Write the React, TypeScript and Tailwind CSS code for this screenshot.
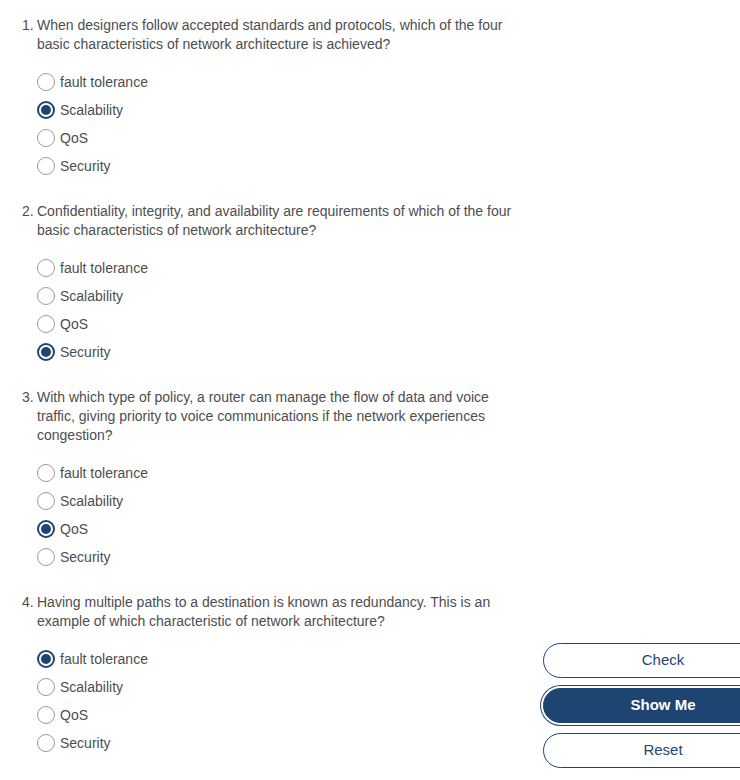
import { useState } from "react"

const options = ["fault tolerance", "Scalability", "QoS", "Security"]

const questions = [
  {
    lines: [
      "When designers follow accepted standards and protocols, which of the four",
      "basic characteristics of network architecture is achieved?",
    ],
    answer: 1,
  },
  {
    lines: [
      "Confidentiality, integrity, and availability are requirements of which of the four",
      "basic characteristics of network architecture?",
    ],
    answer: 3,
  },
  {
    lines: [
      "With which type of policy, a router can manage the flow of data and voice",
      "traffic, giving priority to voice communications if the network experiences",
      "congestion?",
    ],
    answer: 2,
  },
  {
    lines: [
      "Having multiple paths to a destination is known as redundancy. This is an",
      "example of which characteristic of network architecture?",
    ],
    answer: 0,
  },
]

function Radio({ checked }: { checked: boolean }) {
  return (
    <span
      className={
        checked
          ? "flex h-[18px] w-[18px] shrink-0 items-center justify-center rounded-full border-2 border-[#1e4471] bg-white"
          : "flex h-[18px] w-[18px] shrink-0 items-center justify-center rounded-full border border-[#9a9a9a] bg-white"
      }
    >
      {checked && <span className="h-[10px] w-[10px] rounded-full bg-[#1e4471]" />}
    </span>
  )
}

export default function App() {
  const [selected, setSelected] = useState(questions.map((q) => q.answer))

  return (
    <div
      className="flex h-[780px] w-[740px] overflow-hidden bg-white text-[14px] text-[#4d4d4f]"
      style={{ fontFamily: '"Liberation Sans", Arial, sans-serif' }}
    >
      <div className="flex w-[520px] shrink-0 flex-col pl-[22px] pt-[16px]">
        {questions.map((q, qi) => (
          <div key={qi} className="mb-[22px]">
            <div className="flex leading-[19px]">
              <span className="w-[15px] shrink-0">{qi + 1}.</span>
              <div>
                {q.lines.map((l, li) => (
                  <div key={li} className="whitespace-nowrap">{l}</div>
                ))}
              </div>
            </div>
            <div className="mt-[14px] flex flex-col pl-[15px]">
              {options.map((o, oi) => (
                <label
                  key={o}
                  className="flex h-[28px] cursor-pointer items-center gap-[5px]"
                  onClick={() => {
                    const next = [...selected]
                    next[qi] = oi
                    setSelected(next)
                  }}
                >
                  <Radio checked={selected[qi] === oi} />
                  <span>{o}</span>
                </label>
              ))}
            </div>
          </div>
        ))}
      </div>

      <div className="flex flex-1 flex-col justify-end gap-[10px] pb-[12px] pl-[23px]">
        <button className="h-[35px] w-[240px] shrink-0 rounded-full border border-[#1e4471] bg-white text-[15px] text-[#1e4471]">
          Check
        </button>
        <button className="h-[35px] w-[240px] shrink-0 rounded-full border border-[#1e4471] bg-[#1e4471] text-[15px] font-bold text-white shadow-[0_0_0_2px_#fff,0_0_0_3px_#1e4471]">
          Show Me
        </button>
        <button className="h-[35px] w-[240px] shrink-0 rounded-full border border-[#1e4471] bg-white text-[15px] text-[#1e4471]">
          Reset
        </button>
      </div>
    </div>
  )
}
